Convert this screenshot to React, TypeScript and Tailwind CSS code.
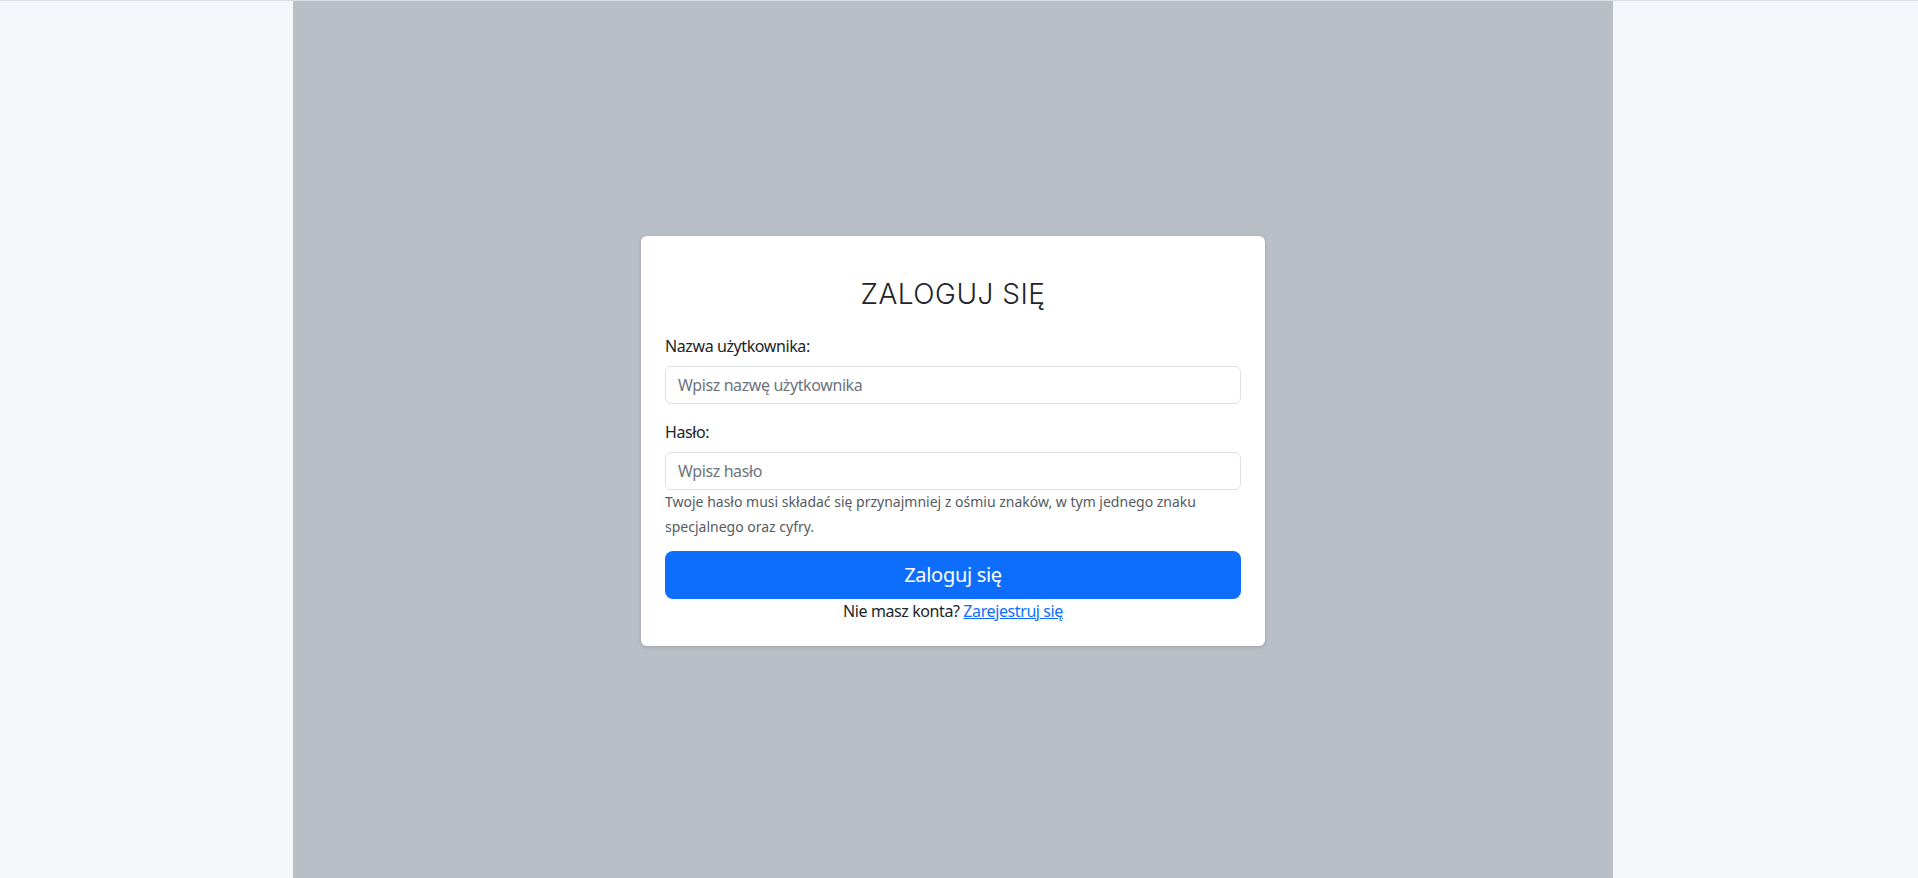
export default function App() {
  const body = { fontFamily: '"Segoe UI", "Noto Sans", "Liberation Sans", sans-serif' };
  return (
    <div className="min-h-[878px] w-full bg-[#f5f6fa] border-t border-[#d9dce2] flex" style={body}>
      <div className="ml-[293px] w-[1320px] bg-[#b9bfc7] flex items-center justify-center pt-[3px]">
        <div className="w-[624px] bg-white rounded-[6px] shadow-[0_1px_4px_rgba(0,0,0,0.15)] px-6 pt-[41px] pb-[23px] text-[#212529]">
          <h2
            className="text-center text-[28px] leading-[34px] font-light tracking-[0.5px] text-[#212529]"
            style={{ fontFamily: 'Inter, "Noto Sans", sans-serif' }}
          >
            ZALOGUJ SIĘ
          </h2>

          <div className="mt-[23px]">
            <label className="block text-[16px] leading-6 mb-2 tracking-[-0.4px]">Nazwa użytkownika:</label>
            <input
              type="text"
              placeholder="Wpisz nazwę użytkownika"
              className="block w-full h-[38px] px-3 text-[16px] tracking-[-0.4px] border border-[#dee2e6] rounded-[6px] placeholder:text-[#6c757d] outline-none"
            />
          </div>

          <div className="mt-4">
            <label className="block text-[16px] leading-6 mb-2 tracking-[-0.4px]">Hasło:</label>
            <input
              type="password"
              placeholder="Wpisz hasło"
              className="block w-full h-[38px] px-3 text-[16px] tracking-[-0.4px] border border-[#dee2e6] rounded-[6px] placeholder:text-[#6c757d] outline-none"
            />
            <p className="text-[14px] leading-[24.5px] text-[#555b61]">
              Twoje hasło musi składać się przynajmniej z ośmiu znaków, w tym jednego znaku specjalnego oraz cyfry.
            </p>
          </div>

          <button className="mt-[12px] w-full h-12 rounded-[8px] bg-[#0d6efd] text-white text-[20px] tracking-[-0.3px]">
            Zaloguj się
          </button>

          <p className="text-center text-[16px] leading-6 tracking-[-0.4px]">
            Nie masz konta?{" "}
            <a href="#" className="text-[#0d6efd] underline">
              Zarejestruj się
            </a>
          </p>
        </div>
      </div>
    </div>
  );
}
